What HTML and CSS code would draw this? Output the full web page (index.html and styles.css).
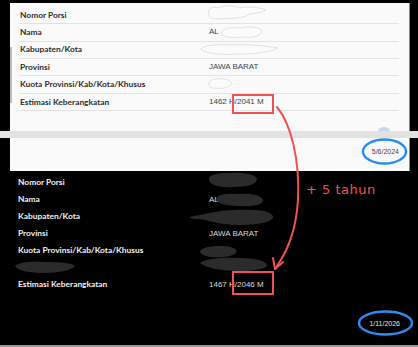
FILE: index.html
```html
<!DOCTYPE html>
<html>
<head>
<meta charset="utf-8">
<link rel="stylesheet" href="styles.css">
</head>
<body>
<div class="page">
  <section class="top">
    <div class="card">
      <div class="scroll"></div>
      <div class="card-body">
        <div class="rows">
          <div class="row"><span class="label">Nomor Porsi</span><span class="value"></span></div>
          <div class="row"><span class="label">Nama</span><span class="value">AL</span></div>
          <div class="row"><span class="label">Kabupaten/Kota</span><span class="value"></span></div>
          <div class="row"><span class="label">Provinsi</span><span class="value">JAWA BARAT</span></div>
          <div class="row"><span class="label">Kuota Provinsi/Kab/Kota/Khusus</span><span class="value"></span></div>
          <div class="row"><span class="label">Estimasi Keberangkatan</span><span class="value">1462 H/2041 M</span></div>
        </div>
        <div class="date-row"><span class="date">5/6/2024</span></div>
      </div>
    </div>
    <div class="peek"></div>
    <div class="band"></div>
  </section>

  <section class="bottom">
    <div class="brows">
      <div class="brow"><span class="blabel">Nomor Porsi</span><span class="bvalue"></span></div>
      <div class="brow"><span class="blabel">Nama</span><span class="bvalue">AL</span></div>
      <div class="brow"><span class="blabel">Kabupaten/Kota</span><span class="bvalue"></span></div>
      <div class="brow"><span class="blabel">Provinsi</span><span class="bvalue">JAWA BARAT</span></div>
      <div class="brow"><span class="blabel">Kuota Provinsi/Kab/Kota/Khusus</span><span class="bvalue"></span></div>
      <div class="brow"><span class="blabel"></span><span class="bvalue"></span></div>
      <div class="brow"><span class="blabel">Estimasi Keberangkatan</span><span class="bvalue">1467 H/2046 M</span></div>
    </div>
    <div class="bdate-row"><span class="bdate">1/11/2026</span></div>
  </section>

  <svg class="annot" width="418" height="347" viewBox="0 0 418 347">
    <g fill="#fbfbfb" stroke="#cfcfcf" stroke-width="0.6">
      <path d="M209 14 C207 8 214 6 220 8 C226 4 234 6 240 8 C248 6 258 7 266 10 C262 14 250 12 246 16 C238 19 226 18 218 19 C212 19 208 17 209 14 Z"/>
      <path d="M221 33 C222 28 232 27 240 28 C250 26 260 27 262 31 C262 36 252 38 242 37 C232 38 224 38 221 33 Z"/>
      <path d="M201 49 C204 45 218 44 232 45 C248 44 266 46 278 48 C270 52 254 54 238 54 C222 55 206 54 201 49 Z"/>
      <path d="M209 84 C208 80 215 78 222 79 C229 79 232 82 231 85 C229 88 220 89 214 88 C210 88 209 86 209 84 Z"/>
    </g>
    <g fill="#2b2b2b">
      <path d="M209 180 C208 175 216 173 228 173 C242 172 256 174 257 179 C257 184 248 187 234 187 C220 188 210 185 209 180 Z"/>
      <path d="M216 199 C216 194 228 193 240 194 C252 193 262 196 263 200 C263 205 252 207 240 206 C228 206 217 204 216 199 Z"/>
      <path d="M190 217 C198 215 205 214 210 213 C220 210 240 209 256 210 C268 211 274 214 273 218 C270 223 254 225 238 225 C222 225 210 221 200 219 C195 219 191 219 190 217 Z"/>
      <path d="M200 251 C202 247 212 246 222 246 C232 246 238 249 236 253 C232 257 220 258 210 257 C204 256 200 254 200 251 Z"/>
      <path d="M200 263 C206 258 224 257 240 258 C256 258 266 261 267 265 C266 269 254 271 238 271 C222 271 206 268 200 263 Z"/>
      <path d="M15 266 C18 262 32 261 46 262 C60 262 72 263 75 266 C72 270 60 273 44 273 C30 273 18 271 15 266 Z"/>
    </g>
    <g fill="none" stroke="#ef5350" stroke-width="2">
      <rect x="233" y="95" width="40" height="18"/>
      <rect x="233" y="272" width="40" height="22"/>
    </g>
    <g fill="none" stroke="#ef5350" stroke-width="2" stroke-linecap="round" stroke-linejoin="round">
      <path d="M277 107 C291 124 300 160 298 200 C296 232 287 252 275 269"/>
      <path d="M273 258 L275 269 L283 262"/>
    </g>
    <g fill="none" stroke="#2a8cf0" stroke-width="2.4">
      <ellipse cx="384.5" cy="151.5" rx="21.5" ry="12"/>
      <ellipse cx="385.5" cy="323" rx="26.5" ry="11.5"/>
    </g>
  </svg>
  <div class="note">+ 5 tahun</div>
</div>
</body>
</html>
```

FILE: styles.css
```css
* { box-sizing: border-box; }
html, body { margin: 0; padding: 0; }
body {
  background: #000;
  width: 418px;
  height: 347px;
  overflow: hidden;
  font-family: Lato, "Open Sans", sans-serif;
}
.page {
  position: relative;
  width: 418px;
  height: 347px;
}
.top {
  position: relative;
  height: 172px;
  padding: 3px 9px 0 9.5px;
}
.card {
  display: flex;
  width: 400px;
  height: 168px;
  background: #fafafa;
  border-right: 1px solid #8a8a8a;
}
.scroll {
  width: 2.5px;
  height: 56px;
  margin-top: 44px;
  background: #bdbdbd;
  flex: none;
}
.card-body {
  flex: 1;
  padding: 3.9px 0 0 7px;
}
.rows {
  width: 380px;
}
.row {
  display: grid;
  grid-template-columns: 190px 1fr;
  height: 17.4px;
  align-items: center;
  border-bottom: 1px solid #e3e3e3;
  padding-bottom: 1px;
}
.label {
  padding-left: 1px;
  font-family: Lato, sans-serif;
  font-size: 8.4px;
  font-weight: 700;
  color: #2e2e2e;
}
.value {
  font-family: "Liberation Sans", Arial, sans-serif;
  font-size: 8px;
  color: #444;
}
.date-row {
  display: flex;
  justify-content: flex-end;
  width: 380px;
  margin-top: 36px;
}
.date {
  font-family: "Liberation Sans", Arial, sans-serif;
  font-size: 7px;
  color: #444;
  line-height: 10px;
}
.peek {
  position: absolute;
  left: 378px;
  top: 127px;
  width: 12px;
  height: 8px;
  border-radius: 50%;
  background: #c9d8ee;
}
.band {
  position: absolute;
  left: 0;
  top: 130.5px;
  width: 418px;
  height: 7px;
  background: #e2e2e2;
}
.bottom {
  height: 175px;
  padding: 1.5px 18px 0 18px;
  border-bottom: 2px solid #9a9a9a;
}
.brow {
  display: grid;
  grid-template-columns: 191px 1fr;
  height: 17px;
  align-items: center;
}
.blabel {
  font-family: Lato, sans-serif;
  font-size: 8.4px;
  font-weight: 700;
  color: #f2f2f2;
}
.bvalue {
  font-family: "Liberation Sans", Arial, sans-serif;
  font-size: 8px;
  color: #dcdcdc;
}
.bdate-row {
  display: flex;
  justify-content: flex-end;
  margin-top: 26px;
}
.bdate {
  font-family: "Liberation Sans", Arial, sans-serif;
  font-size: 7px;
  color: #e0e0e0;
  line-height: 10px;
}
.annot {
  position: absolute;
  left: 0;
  top: 0;
}
.note {
  position: absolute;
  left: 306px;
  top: 182px;
  font-family: "DejaVu Sans", sans-serif;
  font-size: 13px;
  color: #ef5350;
  letter-spacing: 0.5px;
}
```
